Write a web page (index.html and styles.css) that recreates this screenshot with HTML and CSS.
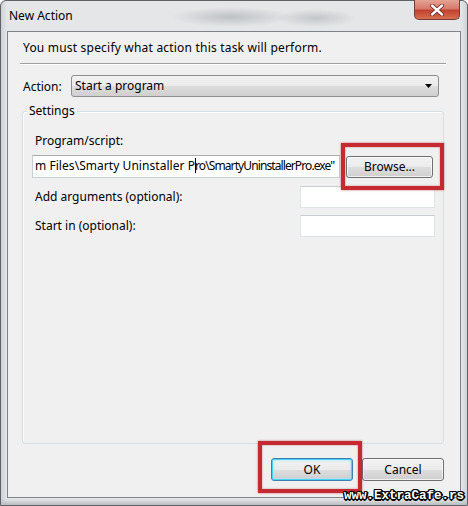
FILE: index.html
```html
<!DOCTYPE html>
<html>
<head>
<meta charset="utf-8">
<link rel="stylesheet" href="styles.css">
</head>
<body>
<div class="window">
  <div class="titlebar">
    <span class="title">New Action</span>
    <div class="close-btn">
      <svg width="14" height="12" viewBox="0 0 14 12"><path d="M2 1.5 L12 10.5 M12 1.5 L2 10.5" stroke="#6a1a1a" stroke-width="4" stroke-linecap="round"/><path d="M2 1.5 L12 10.5 M12 1.5 L2 10.5" stroke="#ffffff" stroke-width="2.4" stroke-linecap="round"/></svg>
    </div>
  </div>
  <div class="client">
    <div class="message">You must specify what action this task will perform.</div>
    <div class="separator"></div>
    <div class="action-row">
      <span class="action-label">Action:</span>
      <div class="select">
        <span>Start a program</span>
        <svg class="arrow" width="8" height="5" viewBox="0 0 8 5"><path d="M0 0 H7 L3.5 4 Z" fill="#000"/></svg>
      </div>
    </div>
    <div class="settings">
      <div class="legend">Settings</div>
      <div class="field-label">Program/script:</div>
      <div class="program-row">
        <div class="input program-input"><span class="path-a">m Files\Smarty Uninstaller P</span><span class="caret"></span><span class="path-b">ro\SmartyUninstallerPro.exe"</span></div>
        <div class="button browse">Browse...</div>
      </div>
      <div class="opt-row first">
        <span class="field-label">Add arguments (optional):</span>
        <div class="input small-input"></div>
      </div>
      <div class="opt-row">
        <span class="field-label">Start in (optional):</span>
        <div class="input small-input"></div>
      </div>
    </div>
    <div class="buttons">
      <div class="button ok">OK</div>
      <div class="button">Cancel</div>
    </div>
  </div>
  <div class="highlight hl-browse"></div>
  <div class="highlight hl-ok"></div>
  <div class="watermark">www.ExtraCafe.rs</div>
</div>
</body>
</html>
```
FILE: styles.css
```css
* { box-sizing: border-box; }
html, body { margin: 0; padding: 0; }
body {
  width: 468px;
  height: 506px;
  overflow: hidden;
  font-family: "Noto Sans", "Open Sans", sans-serif;
  font-size: 12px;
  color: #000;
  background: #fff;
}
.window {
  position: relative;
  width: 468px;
  height: 506px;
  display: flex;
  flex-direction: column;
  padding: 0 6px 7px 6px;
  border: 1px solid #5f6266;
  border-radius: 6px 6px 0 0;
  background:
    radial-gradient(ellipse 60px 10px at 230px 16px, rgba(120,125,130,0.35), rgba(120,125,130,0) 100%),
    radial-gradient(ellipse 40px 9px at 315px 17px, rgba(120,125,130,0.3), rgba(120,125,130,0) 100%),
    linear-gradient(to right, #cfd3d7 0px, #e4e6e8 6px, #e4e6e8 460px, #cfd3d7 466px);
  box-shadow: inset 0 -6px 4px -3px #b9bcbf;
}
.titlebar {
  height: 30px;
  display: flex;
  align-items: flex-start;
  justify-content: space-between;
}
.title {
  margin-top: 7px;
  margin-left: 2px;
  line-height: 16px;
}
.close-btn {
  width: 46px;
  height: 20px;
  margin-top: -1px;
  margin-right: 1px;
  border: 1px solid #7a3a3a;
  border-top: none;
  border-radius: 0 0 5px 5px;
  background: linear-gradient(to bottom, #e5a494 0%, #d7796b 45%, #c2412f 55%, #d5704f 100%);
  display: flex;
  align-items: center;
  justify-content: center;
}
.client {
  flex: 1;
  display: flex;
  flex-direction: column;
  border: 1px solid #7e8389;
  background: #f0f0f0;
  padding: 8px 15px 16px 15px;
}
.message {
  line-height: 16px;
  letter-spacing: 0.2px;
}
.separator {
  margin: 7px -1px 0 -3px;
  height: 2px;
  border-top: 1px solid #a0a0a0;
  border-bottom: 1px solid #ffffff;
}
.action-row {
  display: flex;
  align-items: center;
  margin-top: 10px;
  margin-right: 6px;
}
.action-label {
  width: 48px;
}
.select {
  flex: 1;
  height: 22px;
  border: 1px solid #8e8f8f;
  border-radius: 3px;
  background: linear-gradient(to bottom, #f2f2f2 0%, #ebebeb 50%, #dddddd 51%, #cfcfcf 100%);
  display: flex;
  align-items: center;
  justify-content: space-between;
  padding: 0 5px 0 3px;
  line-height: 16px;
}
.select .arrow { margin-top: 1px; }
.settings {
  flex: 1;
  display: flex;
  flex-direction: column;
  margin: 14px 1px 0 -1px;
  padding: 0 8px 0 12px;
  border: 1px solid #d5dfe5;
  border-radius: 3px;
  box-shadow: inset 1px 1px 0 #fcfcfc;
}
.legend {
  align-self: flex-start;
  margin: -9px 0 14px -8px;
  padding: 0 2px;
  background: #f0f0f0;
  line-height: 16px;
}
.field-label {
  line-height: 16px;
}
.program-row {
  display: flex;
  align-items: center;
  margin-top: 5px;
  margin-left: -3px;
}
.input {
  background: #fff;
  border: 1px solid #c8cdd2;
  border-top-color: #abadb3;
}
.program-input {
  width: 308px;
  height: 23px;
  padding: 2px 0 0 2px;
  line-height: 16px;
  white-space: nowrap;
  overflow: hidden;
}
.path-a { letter-spacing: 0.05px; }
.path-b { letter-spacing: -0.9px; }
.caret {
  display: inline-block;
  width: 1px;
  height: 15px;
  background: #000;
  vertical-align: -3px;
  margin-right: -1px;
}
.button {
  height: 23px;
  border: 1px solid #707070;
  border-radius: 3px;
  background: linear-gradient(to bottom, #f2f2f2 0%, #ebebeb 50%, #dddddd 51%, #cfcfcf 100%);
  box-shadow: inset 0 0 0 1px rgba(255,255,255,0.7);
  display: flex;
  align-items: center;
  justify-content: center;
  line-height: 16px;
}
.browse {
  width: 87px;
  height: 22px;
  margin-left: 6px;
  margin-top: 2px;
}
.opt-row {
  display: flex;
  align-items: center;
  justify-content: space-between;
  margin-top: 7px;
}
.opt-row.first { margin-top: 8px; }
.small-input {
  width: 135px;
  height: 22px;
  border-color: #dfe3e7;
  border-top-color: #c8cdd2;
}
.buttons {
  display: flex;
  justify-content: flex-end;
  gap: 9px;
  margin-top: 14px;
  margin-right: 1px;
}
.buttons .button { width: 82px; }
.button.ok {
  border-color: #3c7fb1;
  box-shadow: inset 0 0 0 1px #48d4f7, inset 0 0 2px 2px rgba(160,225,250,0.5);
}
.highlight {
  position: absolute;
  border: 4px solid #c42a30;
  box-shadow: 0 0 2px rgba(150,20,20,0.6), inset 0 0 2px rgba(150,20,20,0.5);
}
.hl-browse { left: 340px; top: 142px; width: 103px; height: 47px; }
.hl-ok { left: 257px; top: 440px; width: 104px; height: 52px; }
.watermark {
  position: absolute;
  left: 343px;
  top: 486px;
  font-family: "Liberation Mono", "DejaVu Sans Mono", monospace;
  font-weight: bold;
  font-size: 12.5px;
  line-height: 18px;
  color: #fff;
  text-shadow: 1px 0 0 #000, -1px 0 0 #000, 0 1px 0 #000, 0 -1px 0 #000, 1px 1px 0 #000, -1px -1px 0 #000, 1px -1px 0 #000, -1px 1px 0 #000, 2px 0 0 #000, 0 2px 0 #000;
}
```
